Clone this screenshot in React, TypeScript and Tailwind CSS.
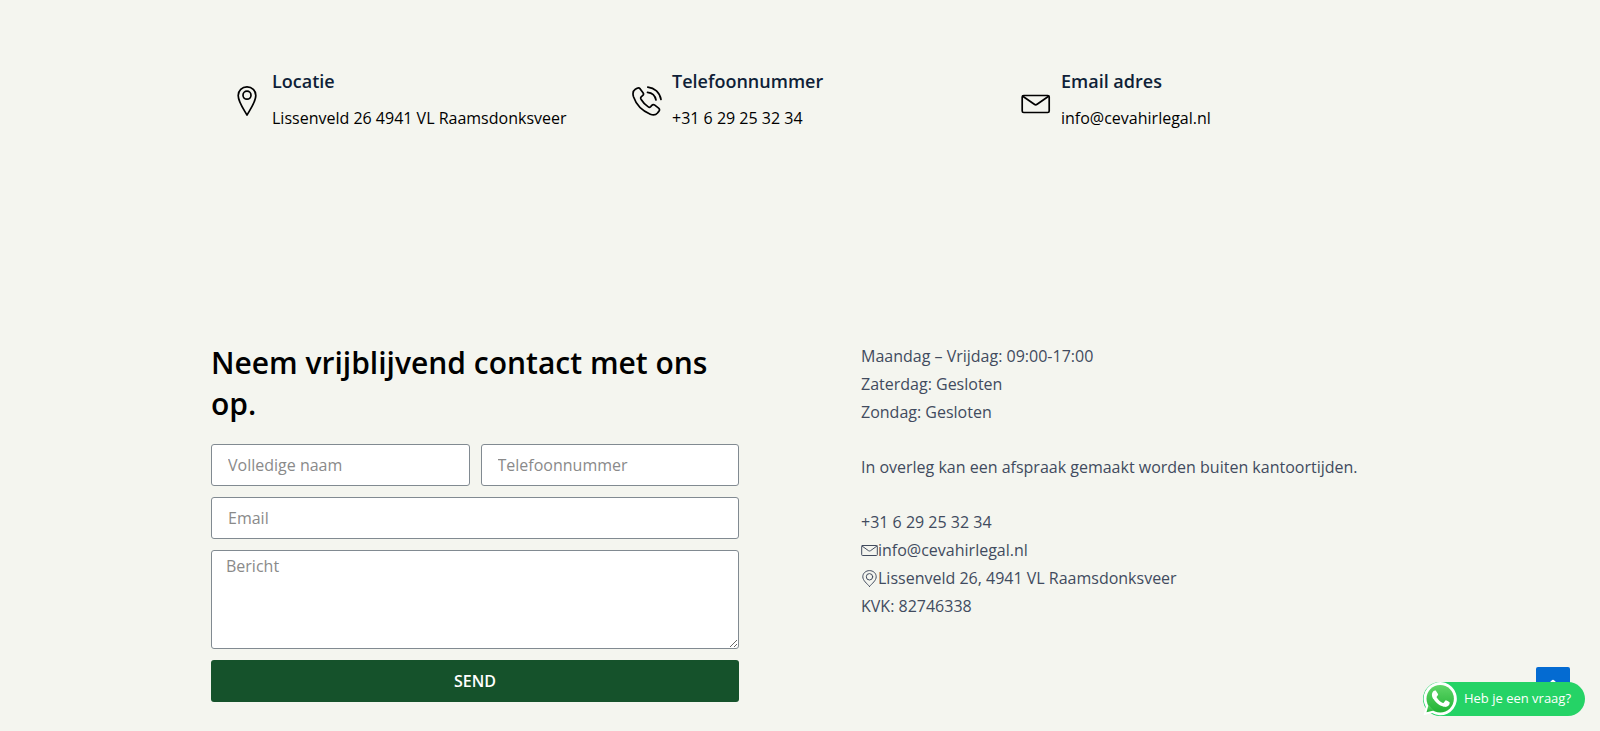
import type { ReactNode } from 'react';

type IconProps = { className?: string };

const stroke = { fill: 'none', stroke: 'currentColor', strokeLinecap: 'round', strokeLinejoin: 'round' } as const;

function PinIcon({ className }: IconProps) {
  return (
    <svg viewBox="0 0 30 30" className={className} {...stroke} strokeWidth="1.7" aria-hidden="true">
      <path d="M15 29C11.500 23 6.200 15.800 6.200 9.500C6.200 4.500 10 .9 15 .9S23.800 4.500 23.800 9.500C23.800 15.800 18.500 23 15 29Z" />
      <circle cx="15" cy="9.200" r="4" />
    </svg>
  );
}

function PhoneIcon({ className }: IconProps) {
  return (
    <svg viewBox="0 0 30 30" className={className} {...stroke} strokeWidth="1.7" aria-hidden="true">
      <path d="M3.300 3.300L5.200 2.200C6.300 1.600 7.400 1.900 8.200 2.900L11 6.700C11.800 7.800 11.600 8.900 10.600 9.700L9.400 10.700C8.600 11.400 8.500 12.300 9 13.200C10.800 16.200 13.300 18.900 16.300 20.900C17.200 21.500 18 21.300 18.700 20.600L19.800 19.400C20.600 18.500 21.800 18.400 22.800 19.200L26.600 22.200C27.600 23 27.700 24.100 27 25.100L25.500 27C23.800 29 21 29.300 18.300 28.200C10.500 25 4 18.200 1.500 10.800C.6 7.800 1 4.800 3.300 3.300Z" />
      <path d="M15.800 1.100C22.500 1.800 27.800 6.500 29 13.500M15.500 6.300C20 6.800 23.200 9.700 24 14" />
    </svg>
  );
}

function MailIcon({ className }: IconProps) {
  return (
    <svg viewBox="0 0 30 30" className={className} {...stroke} strokeWidth="1.7" aria-hidden="true">
      <rect x="1.200" y="9.500" width="27" height="17" rx="1.500" />
      <path d="M1.800 10.300L13.300 18.300Q14.700 19.300 16.100 18.300L27.600 10.300" />
    </svg>
  );
}

function SmallMailIcon({ className }: IconProps) {
  return (
    <svg viewBox="0 0 17 17" className={className} {...stroke} strokeWidth="1" aria-hidden="true">
      <rect x=".7" y="3.500" width="15.600" height="10" rx=".8" />
      <path d="M1 4L7.500 8.700Q8.500 9.300 9.500 8.700L16 4" />
    </svg>
  );
}

function SmallPinIcon({ className }: IconProps) {
  return (
    <svg viewBox="0 0 17 17" className={className} {...stroke} strokeWidth="1" aria-hidden="true">
      <path d="M8.500 16.500C6 13.500 1.800 10.500 1.800 6.800C1.800 3.200 4.800.6 8.500.6S15.200 3.200 15.200 6.800C15.200 10.500 11 13.500 8.500 16.500Z" />
      <circle cx="8.500" cy="6.800" r="3.200" />
    </svg>
  );
}

function WhatsAppIcon({ className }: IconProps) {
  return (
    <svg viewBox="0 0 34 34" className={className} aria-hidden="true">
      <defs>
        <linearGradient id="wa" x1="0" y1="0" x2="0" y2="1">
          <stop offset="0" stopColor="#5fd668" />
          <stop offset="1" stopColor="#22b235" />
        </linearGradient>
      </defs>
      <path fill="#fff" d="M.5 33.300L2.800 24.900A16.600 16.600 0 1 1 9 31.100Z" />
      <circle cx="17.200" cy="16.800" r="13.700" fill="url(#wa)" />
      <path fill="url(#wa)" d="M3.500 30.300L5.500 23L10.800 28.400Z" />
      <path
        fill="#fff"
        d="M13.200 9.300C12.900 8.600 12.500 8.600 12.100 8.600C11.400 8.600 10.800 8.700 10.300 9.300C9.600 10.100 8.900 11.200 8.900 12.900C8.900 15 10.400 17 10.700 17.300C10.900 17.600 13.700 22.100 18 23.800C21.600 25.200 22.400 24.900 23.200 24.800C24.100 24.700 26 23.700 26.300 22.500C26.700 21.400 26.700 20.500 26.600 20.300C26.400 19.900 23.900 18.700 23.400 18.500C22.900 18.300 22.600 18.200 22.300 18.700C21.900 19.200 20.900 20.400 20.600 20.700C20.300 21 20 21.100 19.500 20.800C17.600 20 14.900 17.800 13.600 15.300C13.400 14.800 13.700 14.600 15 12.900C15.200 12.600 15.100 12.300 15 12Z"
      />
    </svg>
  );
}

function ContactItem({ icon, title, children }: { icon: ReactNode; title: string; children: ReactNode }) {
  return (
    <div className="flex items-center gap-2.5">
      {icon}
      <div>
        <h3 className="text-[18px] leading-6 font-semibold text-[#0f1f38]">{title}</h3>
        <p className="mt-[11px] leading-7 text-black">{children}</p>
      </div>
    </div>
  );
}

const field =
  'block w-full rounded-[3px] border border-[#818a91] bg-white text-black placeholder:text-[#8a8a8a] outline-none focus:border-[#15522b]';

export default function App() {
  return (
    <div className="min-h-screen bg-[#f4f5ef] font-['Open_Sans','Noto_Sans',sans-serif] text-[16px]">
      <section className="mx-auto grid max-w-[1200px] grid-cols-[400fr_389fr_379fr] pt-[69px] pl-8">
        <ContactItem title="Locatie" icon={<PinIcon className="size-[30px] shrink-0" />}>
          Lissenveld 26 4941 VL Raamsdonksveer
        </ContactItem>
        <ContactItem title="Telefoonnummer" icon={<PhoneIcon className="size-[30px] shrink-0" />}>
          +31 6 29 25 32 34
        </ContactItem>
        <ContactItem title="Email adres" icon={<MailIcon className="size-[30px] shrink-0" />}>
          info@cevahirlegal.nl
        </ContactItem>
      </section>

      <section className="mx-auto grid max-w-[1178px] grid-cols-2 gap-[122px] pt-[210px] pb-7">
        <div>
          <h2 className="text-[30px] leading-[41px] font-semibold text-black">
            Neem vrijblijvend contact met ons op.
          </h2>
          <form className="mt-5 grid grid-cols-2 gap-[11px]" onSubmit={(e) => e.preventDefault()}>
            <input aria-label="Volledige naam" placeholder="Volledige naam" className={`${field} h-[42px] px-4`} />
            <input aria-label="Telefoonnummer" type="tel" placeholder="Telefoonnummer" className={`${field} h-[42px] px-4`} />
            <input aria-label="Email" type="email" placeholder="Email" className={`${field} col-span-2 h-[42px] px-4`} />
            <textarea
              aria-label="Bericht"
              placeholder="Bericht"
              className={`${field} col-span-2 h-[99px] resize-y px-3.5 py-[3px] leading-6`}
            />
            <button type="submit" className="col-span-2 h-[42px] rounded-[3px] bg-[#15522b] font-semibold text-white">
              SEND
            </button>
          </form>
        </div>

        <div className="flex flex-col gap-[27px] leading-7 text-[#414b5e]">
          <p>
            Maandag – Vrijdag: 09:00-17:00
            <br />
            Zaterdag: Gesloten
            <br />
            Zondag: Gesloten
          </p>
          <p>In overleg kan een afspraak gemaakt worden buiten kantoortijden.</p>
          <address className="not-italic">
            <div>+31 6 29 25 32 34</div>
            <div className="flex items-center">
              <SmallMailIcon className="size-[17px] shrink-0" />
              info@cevahirlegal.nl
            </div>
            <div className="flex items-center">
              <SmallPinIcon className="size-[17px] shrink-0" />
              Lissenveld 26, 4941 VL Raamsdonksveer
            </div>
            <div>KVK: 82746338</div>
          </address>
        </div>
      </section>

      <a
        href="#"
        aria-label="Naar boven"
        className="fixed right-[30px] bottom-[30px] flex size-[34px] items-center justify-center rounded-[2px] bg-[#046bd2] text-white"
      >
        <svg viewBox="0 0 16 16" className="size-4" {...stroke} strokeWidth="2.500" aria-hidden="true">
          <path d="M3 10L8 5L13 10" />
        </svg>
      </a>
      <a
        href="#"
        className="fixed right-[15px] bottom-[15px] flex h-[34px] items-center gap-[7px] rounded-full bg-[#25d366] pr-3.5 text-[13px] text-white"
      >
        <WhatsAppIcon className="size-[34px]" />
        Heb je een vraag?
      </a>
    </div>
  );
}
